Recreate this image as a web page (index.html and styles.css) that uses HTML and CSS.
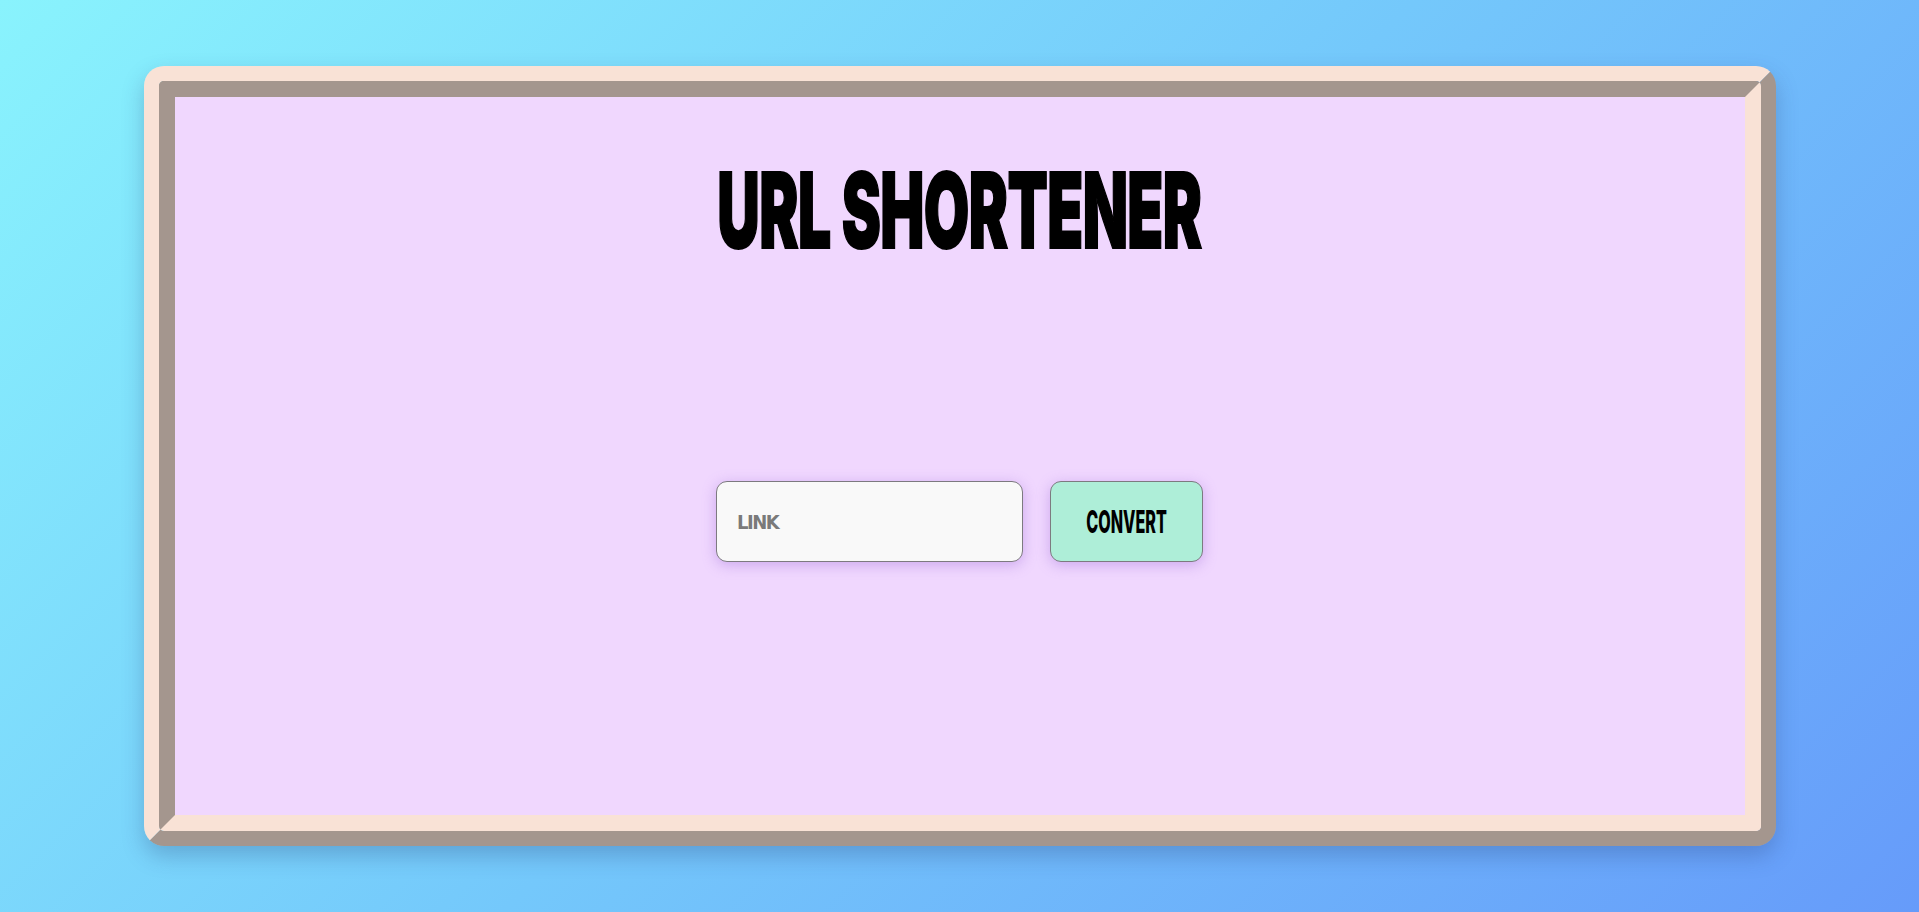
FILE: index.html
```html
<!DOCTYPE html>
<html lang="en">
<head>
<meta charset="utf-8">
<title>URL Shortener</title>
<link rel="stylesheet" href="styles.css">
</head>
<body>
  <main class="frame">
    <div class="frame-inner">
      <section class="panel">
        <h1 class="title"><span class="title-text">URL SHORTENER</span></h1>
        <form class="form">
          <input class="link-input" type="text" placeholder="LINK">
          <button class="convert-btn" type="button"><span class="btn-text">CONVERT</span></button>
        </form>
      </section>
    </div>
  </main>
</body>
</html>
```

FILE: styles.css
```css
* { box-sizing: border-box; }

html, body {
  margin: 0;
  height: 100%;
}

body {
  background: linear-gradient(135deg, #89f3fd 0%, #74c8fb 50%, #669bfa 100%);
  display: flex;
  align-items: center;
  justify-content: center;
  font-family: "Inter", "Liberation Sans", sans-serif;
}

.frame {
  width: 1632px;
  height: 780px;
  border: 15px solid;
  border-color: #f9e2d6 #a4968e #a4968e #f9e2d6;
  border-radius: 20px;
  display: flex;
  box-shadow: 0 10px 22px rgba(40, 60, 120, 0.28);
}

.frame-inner {
  flex: 1;
  display: flex;
  border: 16px solid;
  border-color: #a4968e #f9e2d6 #f9e2d6 #a4968e;
  border-radius: 5px;
}

.panel {
  flex: 1;
  background: #f0d7fe;
  display: flex;
  flex-direction: column;
  align-items: center;
  padding-top: 61px;
}

.title {
  margin: 0;
  font-size: 104px;
  line-height: 1;
  font-weight: 900;
  color: #000;
  height: 103px;
  display: flex;
  justify-content: center;
}

.title-text {
  display: inline-block;
  transform: scaleX(0.565);
  letter-spacing: -1px;
  -webkit-text-stroke: 2px #000;
  white-space: nowrap;
}

.form {
  margin-top: 220px;
  display: flex;
  gap: 27px;
}

.link-input {
  width: 307px;
  height: 81px;
  border: 1px solid #7d7a80;
  border-radius: 11px;
  background: #f9f9f9;
  padding: 0 0 0 20px;
  font-family: "Liberation Sans Narrow", "DejaVu Sans Condensed", "Roboto Condensed", "Inter", sans-serif;
  font-weight: 700;
  font-size: 20px;
  letter-spacing: -1.5px;
  color: #777;
  box-shadow: 0 3px 14px rgba(150, 100, 215, 0.4);
  outline: none;
}

.link-input::placeholder {
  color: #7a7a7a;
}

.convert-btn {
  width: 153px;
  height: 81px;
  border: 1px solid #7d7a80;
  border-radius: 11px;
  background: #aeeed8;
  color: #000;
  font-family: "Inter", sans-serif;
  font-weight: 800;
  font-size: 31px;
  padding: 0;
  box-shadow: 0 3px 14px rgba(150, 100, 215, 0.4);
  cursor: pointer;
  display: flex;
  align-items: center;
  justify-content: center;
}

.btn-text {
  display: inline-block;
  transform: scaleX(0.52);
  white-space: nowrap;
}
```
